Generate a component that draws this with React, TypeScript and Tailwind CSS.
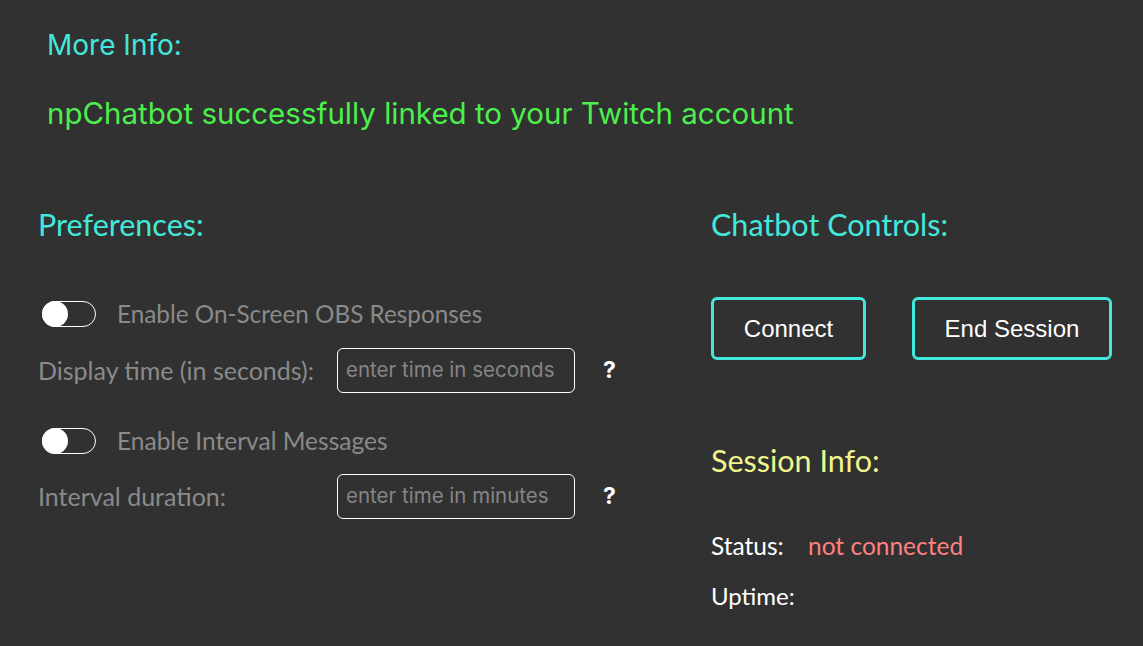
import React from "react";

function Toggle() {
  return (
    <div className="relative w-[54px] h-[26px] rounded-full border border-white shrink-0">
      <div className="absolute left-[-1px] top-[-1px] w-[26px] h-[26px] rounded-full bg-white" />
    </div>
  );
}

export default function App() {
  const fira = { fontFamily: "Lato, 'Noto Sans', sans-serif" };
  const geo = { fontFamily: "Inter, 'Noto Sans', sans-serif" };
  const arial = { fontFamily: "'Liberation Sans', Arial, sans-serif" };
  return (
    <div className="w-[1143px] h-[646px] bg-[#313131] overflow-hidden">
      <div className="pl-[47px] pt-[28px]" style={geo}>
        <div className="text-[28px] leading-[34px] text-[#43e7dc]">More Info:</div>
        <div className="mt-[34px] text-[29.5px] leading-[34px] text-[#4cf04c]">
          npChatbot successfully linked to your Twitch account
        </div>
      </div>
      <div className="flex pl-[38px] mt-[76px]" style={fira}>
        <div className="w-[673px] flex flex-col">
          <div className="text-[30.5px] leading-[36px] text-[#43e7dc]">Preferences:</div>
          <div className="mt-[57px] flex items-center gap-[21px] pl-[4px] h-[30px]">
            <Toggle />
            <span className="text-[24.3px] text-[#8a8a8a]">Enable On-Screen OBS Responses</span>
          </div>
          <div className="mt-[19px] flex items-center h-[45px]">
            <span className="w-[299px] text-[25px] text-[#8a8a8a]">Display time (in seconds):</span>
            <div className="w-[238px] h-[45px] rounded-[6px] border border-white flex items-center px-[8px] text-[20.5px] text-[#858585]" style={geo}>
              enter time in seconds
            </div>
            <span className="ml-[28px] text-[23px] font-bold text-white" style={geo}>?</span>
          </div>
          <div className="mt-[33px] flex items-center gap-[21px] pl-[4px] h-[30px]">
            <Toggle />
            <span className="text-[24.5px] text-[#8a8a8a]">Enable Interval Messages</span>
          </div>
          <div className="mt-[18px] flex items-center h-[45px]">
            <span className="w-[299px] text-[25px] text-[#8a8a8a]">Interval duration:</span>
            <div className="w-[238px] h-[45px] rounded-[6px] border border-white flex items-center px-[8px] text-[20.5px] text-[#858585]" style={geo}>
              enter time in minutes
            </div>
            <span className="ml-[28px] text-[23px] font-bold text-white" style={geo}>?</span>
          </div>
        </div>
        <div className="flex flex-col">
          <div className="text-[30.5px] leading-[36px] text-[#43e7dc]">Chatbot Controls:</div>
          <div className="mt-[55px] flex gap-[46px]">
            <button className="w-[155px] h-[63px] rounded-[6px] border-[3px] border-[#40e8dc] text-white text-[24px]" style={arial}>
              Connect
            </button>
            <button className="w-[200px] h-[63px] rounded-[6px] border-[3px] border-[#40e8dc] text-white text-[24px]" style={arial}>
              End Session
            </button>
          </div>
          <div className="mt-[82px] text-[30.5px] leading-[36px] text-[#f0f58c]">Session Info:</div>
          <div className="mt-[53px] flex text-[24.5px] leading-[30px]">
            <span className="w-[97px] text-white">Status:</span>
            <span className="text-[#ff8080]">not connected</span>
          </div>
          <div className="mt-[20px] text-[24px] leading-[30px] text-white">Uptime:</div>
        </div>
      </div>
    </div>
  );
}
